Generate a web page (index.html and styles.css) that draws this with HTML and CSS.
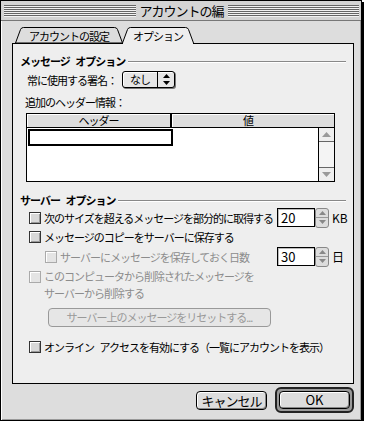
FILE: index.html
```html
<!DOCTYPE html>
<html lang="ja">
<head>
  <meta charset="UTF-8">
  <title>アカウントの編集</title>
  <link rel="stylesheet" href="styles.css">
</head>
<body>
  <div class="window">
    <div class="titlebar">
      <span class="stripes"></span>
      <span class="title">アカウントの編</span>
      <span class="stripes"></span>
    </div>

    <div class="window-body">
      <!-- tabs -->
      <div class="tabs">
        <div class="tab tab-account">
          <svg class="tab-shape" width="108" height="16" viewBox="0 0 108 16">
            <path d="M0.5 16 L5.5 2.5 Q6.3 0.5 8.5 0.5 L99.5 0.5 Q101.7 0.5 102.5 2.5 L107.5 16 Z" fill="#ddd" stroke="#000"/>
          </svg>
          <span class="tab-label">アカウントの設定</span>
        </div>
        <div class="tab tab-options active">
          <svg class="tab-shape" width="72" height="17" viewBox="0 0 72 17">
            <path d="M0.5 17 L0.5 16 L5.5 2.5 Q6.3 0.5 8.5 0.5 L63.5 0.5 Q65.7 0.5 66.5 2.5 L71.5 16 L71.5 17" fill="#eee" stroke="#000"/>
          </svg>
          <span class="tab-label">オプション</span>
        </div>
      </div>

      <div class="panel">
        <div class="group-head"><span>メッセージ オプション</span></div>

        <div class="sig-row">
          <span>常に使用する署名：</span>
          <div class="popup">
            <span class="popup-label">なし</span>
            <span class="popup-arrows">
              <svg width="7" height="11" viewBox="0 0 7 11"><path d="M3.5 0 L7 4 L0 4 Z M0 7 L7 7 L3.5 11 Z" fill="#000"/></svg>
            </span>
          </div>
        </div>

        <div class="header-label">追加のヘッダー情報：</div>

        <div class="table">
          <div class="table-head">
            <div class="th th-name">ヘッダー</div>
            <div class="th th-value">値</div>
          </div>
          <div class="table-body">
            <div class="rows">
              <div class="row-input"></div>
            </div>
            <div class="scrollbar">
              <div class="sb-btn sb-up">
                <svg width="9" height="5" viewBox="0 0 9 5"><path d="M4.5 0 L9 5 L0 5 Z" fill="#999"/></svg>
              </div>
              <div class="sb-track"></div>
              <div class="sb-btn sb-down">
                <svg width="9" height="5" viewBox="0 0 9 5"><path d="M0 0 L9 0 L4.5 5 Z" fill="#999"/></svg>
              </div>
            </div>
          </div>
        </div>

        <div class="group-head group-server"><span>サーバー オプション</span></div>

        <div class="check-row row-partial">
          <label class="check-label"><span class="check"></span>次のサイズを超えるメッセージを部分的に取得する</label>
          <div class="num-group">
            <span class="num">20</span>
            <span class="stepper">
              <span class="step"><svg width="7" height="4" viewBox="0 0 7 4"><path d="M3.5 0 L7 4 L0 4 Z" fill="#888"/></svg></span>
              <span class="step"><svg width="7" height="4" viewBox="0 0 7 4"><path d="M0 0 L7 0 L3.5 4 Z" fill="#888"/></svg></span>
            </span>
            <span class="unit">KB</span>
          </div>
        </div>

        <div class="check-row">
          <label class="check-label"><span class="check"></span>メッセージのコピーをサーバーに保存する</label>
        </div>

        <div class="check-row row-days">
          <label class="check-label disabled"><span class="check"></span>サーバーにメッセージを保存しておく日数</label>
          <div class="num-group">
            <span class="num">30</span>
            <span class="stepper">
              <span class="step"><svg width="7" height="4" viewBox="0 0 7 4"><path d="M3.5 0 L7 4 L0 4 Z" fill="#888"/></svg></span>
              <span class="step"><svg width="7" height="4" viewBox="0 0 7 4"><path d="M0 0 L7 0 L3.5 4 Z" fill="#888"/></svg></span>
            </span>
            <span class="unit">日</span>
          </div>
        </div>

        <div class="check-row row-delete">
          <label class="check-label disabled"><span class="check"></span><span>このコンピュータから削除されたメッセージを<br>サーバーから削除する</span></label>
        </div>

        <div class="reset-btn">サーバー上のメッセージをリセットする...</div>

        <div class="check-row row-online">
          <label class="check-label"><span class="check"></span>オンライン アクセスを有効にする（一覧にアカウントを表示）</label>
        </div>
      </div>

      <div class="actions">
        <div class="btn">キャンセル</div>
        <div class="default-ring"><div class="btn btn-ok">OK</div></div>
      </div>
    </div>
  </div>
</body>
</html>
```

FILE: styles.css
```css
/* Reset */
* {
  margin: 0;
  padding: 0;
  box-sizing: border-box;
}

body {
  background: #fff;
  font-family: "Noto Sans CJK JP", sans-serif;
  font-size: 11px;
  letter-spacing: -1px;
  word-spacing: 4px;
  line-height: 14px;
  color: #000;
}

/* Window frame */
.window {
  width: 362px;
  height: 421px;
  border: 1px solid #000;
  background: #ddd;
  box-shadow: 2px 2px 0 #000, inset 1px 1px 0 #fff, inset -1px -1px 0 #999;
  display: flex;
  flex-direction: column;
}

.titlebar {
  height: 20px;
  display: flex;
  align-items: center;
  gap: 3px;
  padding: 0 2px 0 3px;
  border-bottom: 1px solid #777;
  background: #d4d4d4;
}
.stripes {
  flex: 1;
  height: 12px;
  background: repeating-linear-gradient(to bottom, #666 0 1px, #f2f2f2 1px 2px);
}
.title {
  font-size: 13px;
  padding: 0 1px;
  line-height: 18px;
}

.window-body {
  flex: 1;
  display: flex;
  flex-direction: column;
  padding: 6px 7px 0 11px;
}

/* Tabs */
.tabs {
  display: flex;
  align-items: flex-start;
  height: 16px;
  margin-left: 3px;
}
.tab {
  position: relative;
  height: 16px;
  display: flex;
  justify-content: center;
  align-items: center;
}
.tab-shape {
  position: absolute;
  left: 0;
  top: 0;
}
.tab-label {
  position: relative;
  padding-top: 1px;
}
.tab-account { width: 108px; }
.tab-options {
  width: 72px;
  height: 17px;
  margin-left: -1px;
  z-index: 1;
  padding-bottom: 1px;
}

/* Panel */
.panel {
  height: 341px;
  width: 342px;
  border: 1px solid #000;
  background: #eee;
  padding: 10px 7px 0 7px;
  display: flex;
  flex-direction: column;
}

.group-head {
  height: 14px;
  display: flex;
  align-items: center;
  font-weight: 700;
}
.group-head::after {
  content: "";
  flex: 1;
  height: 1px;
  margin-left: 3px;
  background: #888;
  box-shadow: 0 1px 0 #fff;
}
.group-server { margin-top: 11px; }

.sig-row {
  margin: 3px 0 0 7px;
  height: 17px;
  display: flex;
  align-items: center;
}
.popup {
  margin-left: 5px;
  width: 53px;
  height: 17px;
  border: 1px solid #000;
  border-radius: 3px;
  background: #e6e6e6;
  box-shadow: 1px 1px 0 #777, inset 1px 1px 0 #fff;
  display: flex;
}
.popup-label {
  flex: 1;
  padding-left: 7px;
  line-height: 15px;
}
.popup-arrows {
  width: 17px;
  border-left: 1px solid #000;
  display: flex;
  align-items: center;
  justify-content: center;
}

.header-label {
  margin: 7px 0 0 5px;
  height: 14px;
}

/* Header list */
.table {
  margin: 4px 0 0 6px;
  width: 309px;
  height: 69px;
  border: 1px solid #000;
  background: #fff;
  display: flex;
  flex-direction: column;
}
.table-head {
  height: 14px;
  display: flex;
  border-bottom: 1px solid #000;
}
.th {
  background: #ddd;
  box-shadow: inset 1px 1px 0 #fff;
  text-align: center;
  line-height: 13px;
}
.th-name {
  width: 145px;
  border-right: 2px solid #000;
}
.th-value {
  flex: 1;
  padding-right: 10px;
}
.table-body {
  flex: 1;
  display: flex;
}
.rows {
  flex: 1;
  padding: 1px 0 0 1px;
}
.row-input {
  width: 145px;
  height: 17px;
  border: 2px solid #000;
  background: #fff;
}
.scrollbar {
  width: 16px;
  border-left: 1px solid #000;
  background: #f4f4f4;
  display: flex;
  flex-direction: column;
}
.sb-btn {
  height: 14px;
  display: flex;
  align-items: center;
  justify-content: center;
  background: #eee;
}
.sb-up { border-bottom: 1px solid #666; }
.sb-down { border-top: 1px solid #666; }
.sb-track { flex: 1; }

/* Checkbox rows */
.check-row {
  margin-left: 9px;
  height: 19px;
  display: flex;
  align-items: center;
  justify-content: space-between;
}
.row-partial { margin-top: 1px; }
.row-days {
  margin-top: 1px;
  margin-left: 25px;
}
.row-delete {
  margin-top: 2px;
  height: 34px;
  align-items: flex-start;
  line-height: 17px;
}
.row-delete .check { margin-top: 3px; }
.row-online {
  margin-top: 13px;
  height: 14px;
}

.check-label {
  display: flex;
  align-items: center;
}
.row-delete .check-label { align-items: flex-start; }
.check {
  width: 12px;
  height: 12px;
  margin-right: 3px;
  flex: none;
  border: 1px solid #333;
  background: #d8d8d8;
  box-shadow: inset 1px 1px 0 #fff, inset -1px -1px 0 #999;
}
.check-label.disabled { color: #8c8c8c; }
.check-label.disabled .check {
  border-color: #aaa;
  background: #e4e4e4;
  box-shadow: inset 1px 1px 0 #fff;
}

.num-group {
  display: flex;
  align-items: center;
}
.num {
  width: 38px;
  height: 19px;
  border: 1px solid #000;
  background: #fff;
  box-shadow: inset 1px 1px 0 #bbb;
  font-size: 13px;
  letter-spacing: 0;
  line-height: 17px;
  padding-left: 3px;
}
.stepper {
  width: 14px;
  height: 20px;
  border: 1px solid #888;
  border-radius: 3px;
  background: #ddd;
  display: flex;
  flex-direction: column;
}
.step {
  flex: 1;
  display: flex;
  align-items: center;
  justify-content: center;
}
.step + .step { border-top: 1px solid #999; }
.unit {
  width: 14px;
  margin-left: 3px;
  font-size: 12px;
  letter-spacing: 0;
}

.reset-btn {
  margin: 6px 0 0 28px;
  width: 223px;
  height: 19px;
  border: 1px solid #999;
  border-radius: 4px;
  background: #e6e6e6;
  color: #999;
  text-align: center;
  line-height: 17px;
}

/* Dialog buttons */
.actions {
  margin-top: 3px;
  display: flex;
  justify-content: flex-end;
  align-items: center;
  gap: 8px;
}
.btn {
  width: 71px;
  height: 19px;
  border: 1px solid #000;
  border-radius: 4px;
  background: #ddd;
  box-shadow: inset 1px 1px 0 #fff, inset -1px -1px 0 #888;
  font-size: 13px;
  line-height: 17px;
  text-align: center;
}
.default-ring {
  border: 2px solid #222;
  border-radius: 6px;
  padding: 2px;
  background: #999;
}
.btn-ok {
  height: 18px;
  line-height: 16px;
  letter-spacing: 0;
}
```
